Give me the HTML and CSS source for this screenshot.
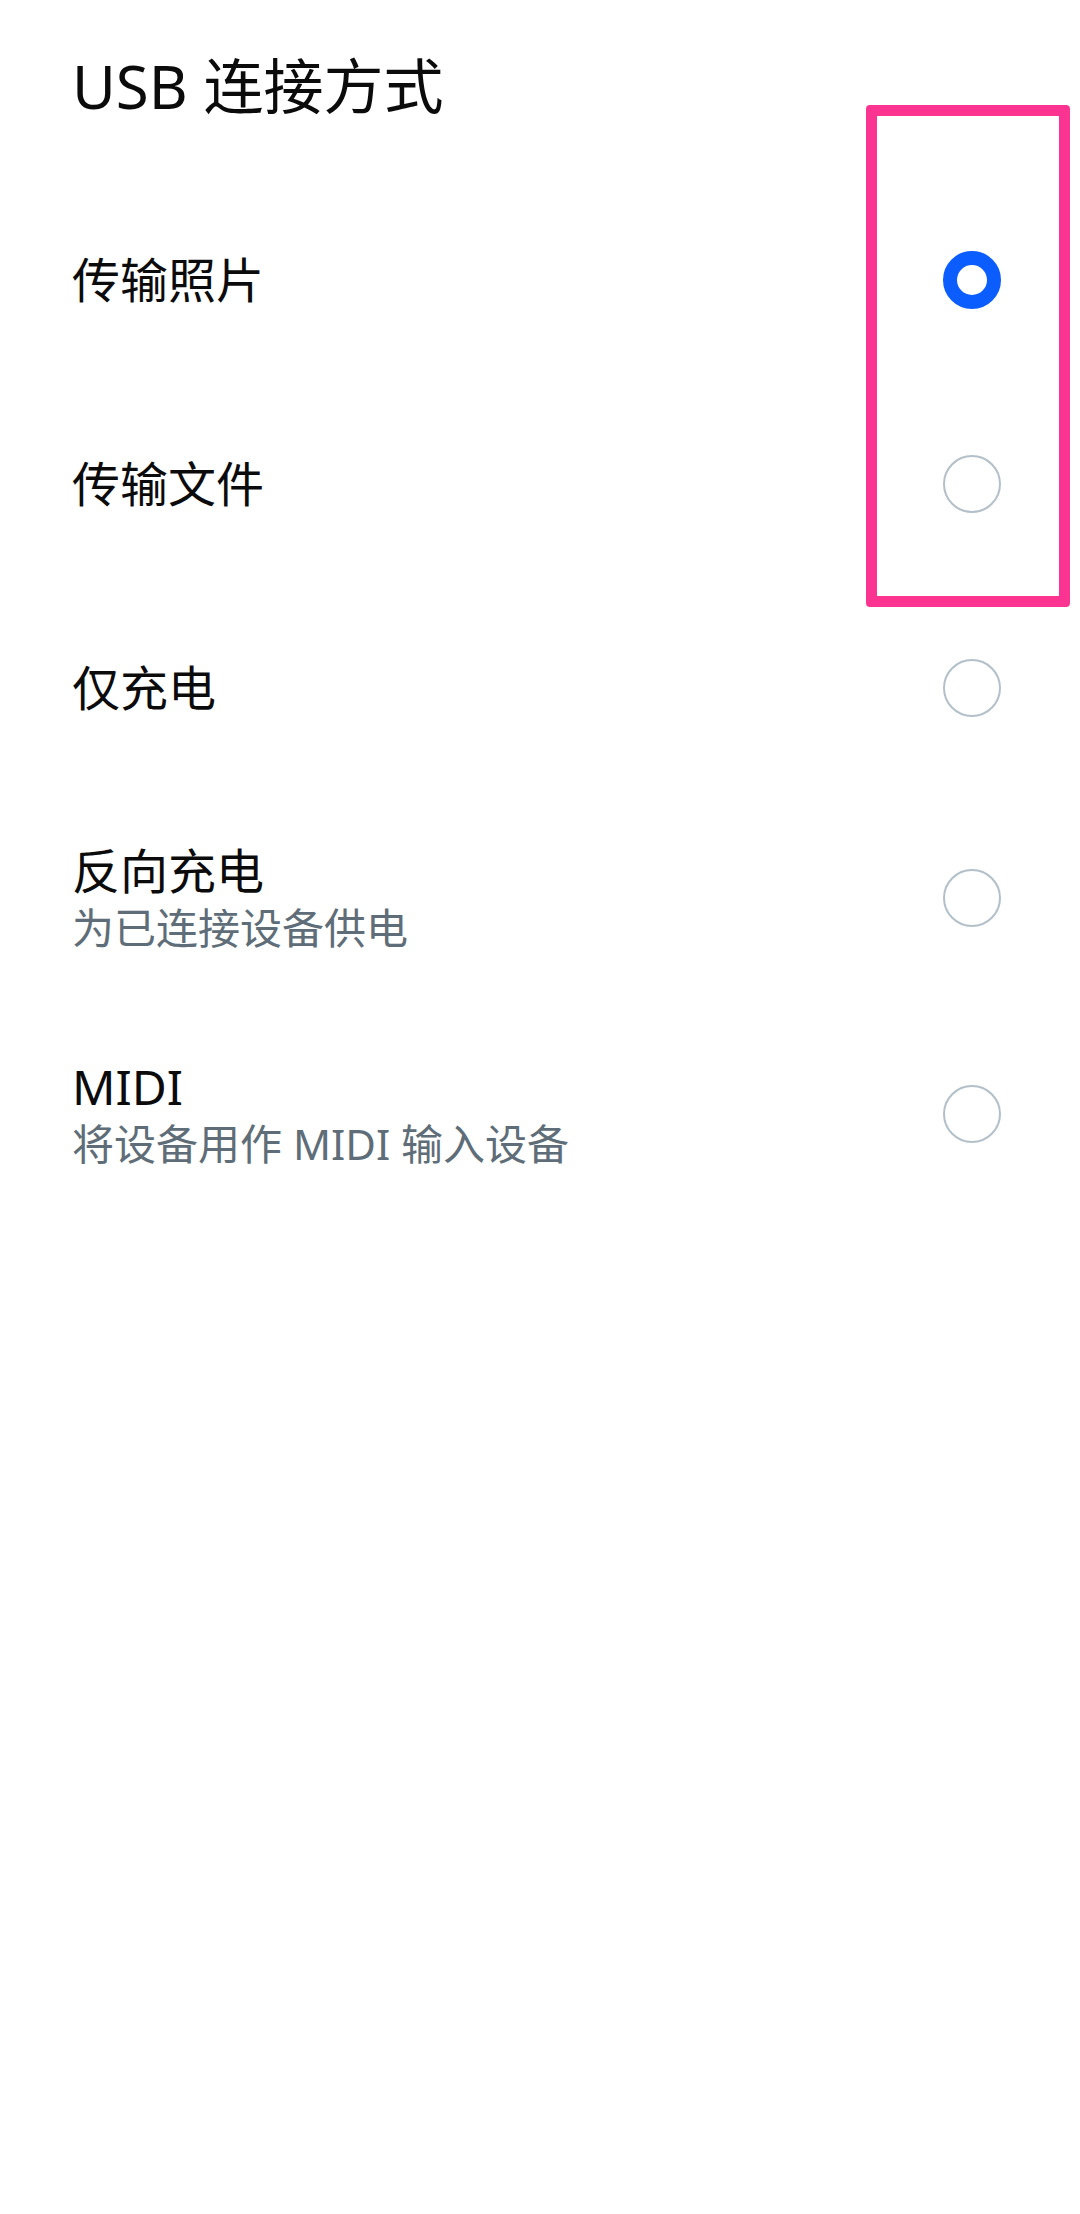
FILE: index.html
```html
<!DOCTYPE html>
<html lang="zh-CN">
<head>
  <meta charset="UTF-8">
  <title>USB 连接方式</title>
  <link rel="stylesheet" href="styles.css">
</head>
<body>
  <div class="page">
    <!-- 标题 -->
    <header class="page-head">
      <h1>USB 连接方式</h1>
    </header>

    <!-- 选项列表 -->
    <ul class="options">
      <li class="option">
        <div class="text">
          <div class="label">传输照片</div>
        </div>
        <span class="radio checked"></span>
      </li>
      <li class="option">
        <div class="text">
          <div class="label">传输文件</div>
        </div>
        <span class="radio"></span>
      </li>
      <li class="option">
        <div class="text">
          <div class="label">仅充电</div>
        </div>
        <span class="radio"></span>
      </li>
      <li class="option has-sub">
        <div class="text">
          <div class="label">反向充电</div>
          <div class="sub">为已连接设备供电</div>
        </div>
        <span class="radio"></span>
      </li>
      <li class="option has-sub">
        <div class="text">
          <div class="label">MIDI</div>
          <div class="sub">将设备用作 MIDI 输入设备</div>
        </div>
        <span class="radio"></span>
      </li>
    </ul>

    <!-- 강조 표시 -->
    <div class="highlight"></div>
  </div>
</body>
</html>
```

FILE: styles.css
```css
/* 기본 리셋 */
body {
  margin: 0;
  background: #fff;
  font-family: "Noto Sans", "Noto Sans CJK SC", sans-serif;
  color: #0b0b0b;
}

.page {
  position: relative;
  min-height: 2214px;
}

/* === 标题 === */
.page-head {
  padding: 56px 72px 62px;
}
.page-head h1 {
  margin: 0;
  font-size: 60px;
  line-height: 60px;
  font-weight: 400;
}

/* === 选项 === */
.options {
  list-style: none;
  margin: 0;
  padding: 0;
}
.option {
  display: flex;
  align-items: center;
  min-height: 204px;
  padding: 0 79px 0 72px;
  box-sizing: border-box;
}
.option.has-sub {
  min-height: 216px;
}
.option .text {
  flex: 1;
}
.option .label {
  font-size: 48px;
  line-height: 58px;
}
.option .sub {
  margin-top: 1px;
  font-size: 42px;
  line-height: 54px;
  color: #5e6d78;
}

/* === 单选按钮 === */
.radio {
  width: 58px;
  height: 58px;
  border-radius: 50%;
  border: 2.5px solid #b3c0c9;
  box-sizing: border-box;
  flex-shrink: 0;
}
.radio.checked {
  border: 14px solid #0c5dff;
}

/* 빨간 박스 */
.highlight {
  position: absolute;
  left: 866px;
  top: 105px;
  width: 204px;
  height: 502px;
  border: 11px solid #fb3492;
  border-radius: 4px;
  box-sizing: border-box;
}
```
